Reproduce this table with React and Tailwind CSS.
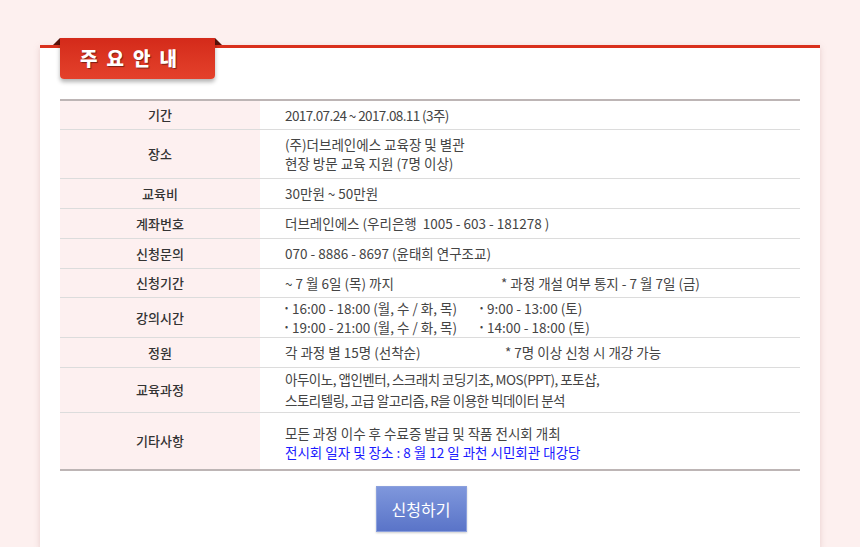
import React from 'react';

const font = { fontFamily: '"Noto Sans CJK KR", "Noto Sans", sans-serif' };

const Dot = () => <span className="inline-block text-[9px] leading-none relative -top-[3px] mr-[4px]">•</span>;

const rows = [
    { label: '기간', h: 'h-[29px]', content: <p className="tracking-[-0.6px]">2017.07.24 ~ 2017.08.11 (3주)</p> },
    {
        label: '장소', h: 'h-[49px]', content: (
            <div className="leading-[19px]">
                <p>(주)더브레인에스 교육장 및 별관</p>
                <p>현장 방문 교육 지원 (7명 이상)</p>
            </div>
        )
    },
    { label: '교육비', h: 'h-[30px]', content: <p>30만원 ~ 50만원</p> },
    { label: '계좌번호', h: 'h-[30px]', content: <p>더브레인에스 (우리은행&nbsp; 1005 - 603 - 181278 )</p> },
    { label: '신청문의', h: 'h-[30px]', content: <p>070 - 8886 - 8697 (윤태희 연구조교)</p> },
    {
        label: '신청기간', h: 'h-[29px]', content: (
            <div className="flex">
                <p className="w-[216px]">~ 7 월 6일 (목) 까지</p>
                <p>* 과정 개설 여부 통지 - 7 월 7일 (금)</p>
            </div>
        )
    },
    {
        label: '강의시간', h: 'h-[40px]', content: (
            <div className="grid grid-cols-[195px_1fr] leading-[19px]">
                <p><Dot />16:00 - 18:00 (월, 수 / 화, 목)</p>
                <p><Dot />9:00 - 13:00 (토)</p>
                <p><Dot />19:00 - 21:00 (월, 수 / 화, 목)</p>
                <p><Dot />14:00 - 18:00 (토)</p>
            </div>
        )
    },
    {
        label: '정원', h: 'h-[30px]', content: (
            <div className="flex">
                <p className="w-[220px]">각 과정 별 15명 (선착순)</p>
                <p>* 7명 이상 신청 시 개강 가능</p>
            </div>
        )
    },
    {
        label: '교육과정', h: 'h-[45px]', content: (
            <div className="leading-[21px] tracking-[-0.5px]">
                <p>아두이노, 앱인벤터, 스크래치 코딩기초, MOS(PPT), 포토샵,</p>
                <p>스토리텔링, 고급 알고리즘, R을 이용한 빅데이터 분석</p>
            </div>
        )
    },
    {
        label: '기타사항', h: 'h-[56px]', last: true, content: (
            <div className="leading-[19px] pt-[4px]">
                <p>모든 과정 이수 후 수료증 발급 및 작품 전시회 개최</p>
                <p className="text-[#1a1aff]">전시회 일자 및 장소 : 8 월 12 일 과천 시민회관 대강당</p>
            </div>
        )
    },
];

export default function App() {
    return (
        <div className="min-h-[547px] bg-[#fdf0ef] pt-[45px] overflow-hidden" style={font}>
            <div className="relative mx-auto w-[780px] min-h-[502px] bg-white border-t-[3px] border-[#d9301c] shadow-[0_2px_6px_rgba(190,140,140,0.35)] px-5 pt-[51px] pb-4">
                {/* ribbon badge */}
                <div className="absolute -top-[10px] left-[13px] w-[169px] h-[44px]">
                    <div className="absolute left-0 top-0 w-0 h-0 border-l-[7px] border-l-transparent border-b-[7px] border-b-[#5a120a]" />
                    <div className="absolute right-0 top-0 w-0 h-0 border-r-[7px] border-r-transparent border-b-[7px] border-b-[#5a120a]" />
                    <div className="absolute left-[7px] right-[7px] top-0 h-[41px] rounded-b-[4px] bg-gradient-to-b from-[#d42a1a] to-[#e4412b] shadow-[0_3px_4px_rgba(0,0,0,0.3)] flex items-center pl-[20px]">
                        <span className="text-white text-[19px] font-black tracking-[9px] [text-shadow:1px_1px_1px_rgba(0,0,0,0.45)]">주요안내</span>
                    </div>
                </div>

                <div className="border-t-2 border-b-2 border-[#bdb5b5] text-[#444]">
                    {rows.map((r) => (
                        <div key={r.label} className={`grid grid-cols-[200px_1fr] ${r.h} ${r.last ? '' : 'border-b border-[#dcdcdc]'}`}>
                            <div className="bg-[#fdf0f0] flex items-center justify-center font-medium text-[13px] text-[#333]">{r.label}</div>
                            <div className="flex items-center pl-[25px] text-[13.5px]">{r.content}</div>
                        </div>
                    ))}
                </div>

                <div className="flex justify-center mt-[15px] pr-[18px]">
                    <button className="w-[91px] h-[46px] bg-gradient-to-b from-[#7f97dc] to-[#5a74c8] border border-[#8ba0dd] text-white text-[16px] shadow-[0_1px_2px_rgba(0,0,0,0.2)]">
                        신청하기
                    </button>
                </div>
            </div>
        </div>
    );
}
